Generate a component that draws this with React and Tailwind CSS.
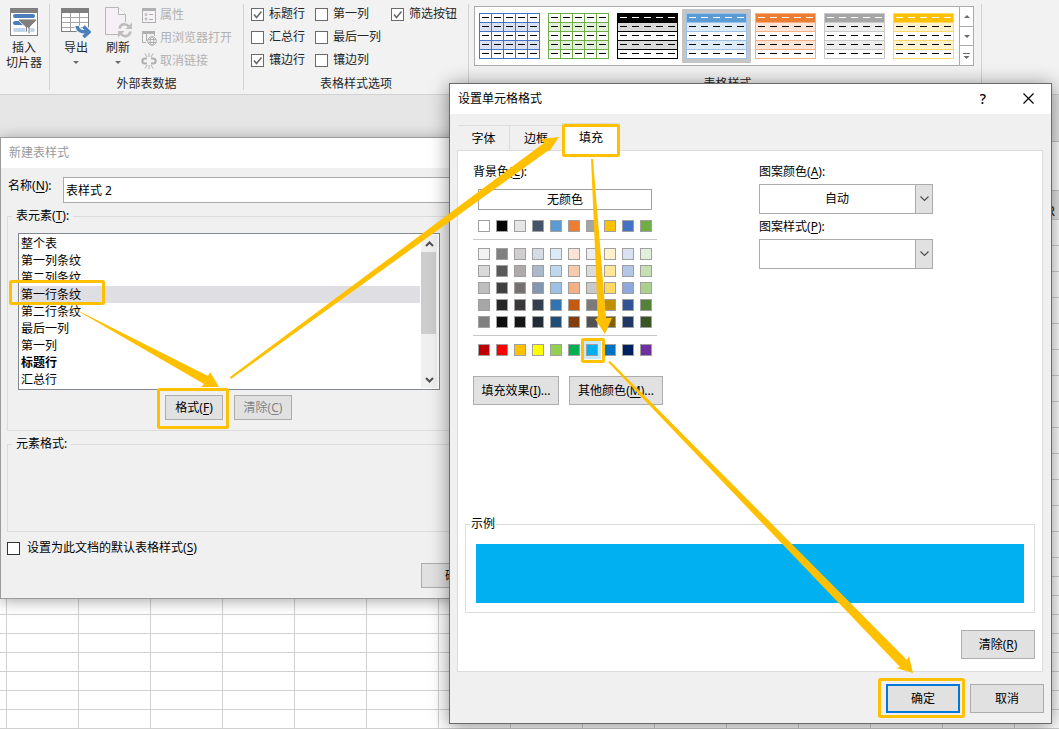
import React from 'react';
import clsx from 'clsx';

const tableElements = ['整个表', '第一列条纹', '第二列条纹', '第一行条纹', '第二行条纹', '最后一列', '第一列', '标题行', '汇总行'];

const styleOptions = [
  [['标题行', true], ['汇总行', false], ['镶边行', true]],
  [['第一列', false], ['最后一列', false], ['镶边列', false]],
  [['筛选按钮', true]],
];

const tableStyles = [
  { line: '#4472c4', head: '#ffffff', band: '#d9e1f2', dash: '#000000', cols: true },
  { line: '#70ad47', head: '#ffffff', band: '#e2efda', dash: '#000000', cols: true },
  { line: '#000000', head: '#000000', band: '#d9d9d9', dash: '#ffffff' },
  { line: '#9bc2e6', head: '#5b9bd5', band: '#ddebf7', dash: '#ffffff', selected: true },
  { line: '#f4b084', head: '#ed7d31', band: '#fce4d6', dash: '#ffffff' },
  { line: '#c9c9c9', head: '#a5a5a5', band: '#ededed', dash: '#ffffff' },
  { line: '#ffd966', head: '#ffc000', band: '#fff2cc', dash: '#ffffff' },
];

const themeColors = ['#ffffff', '#000000', '#e7e6e6', '#44546a', '#5b9bd5', '#ed7d31', '#a5a5a5', '#ffc000', '#4472c4', '#70ad47'];

const themeTints = [
  ['#f2f2f2', '#808080', '#d0cece', '#d6dce4', '#ddebf7', '#fce4d6', '#ededed', '#fff2cc', '#d9e1f2', '#e2efda'],
  ['#d9d9d9', '#595959', '#aeaaaa', '#acb9ca', '#bdd7ee', '#f8cbad', '#dbdbdb', '#ffe699', '#b4c6e7', '#c6e0b4'],
  ['#bfbfbf', '#404040', '#757171', '#8497b0', '#9bc2e6', '#f4b084', '#c9c9c9', '#ffd966', '#8ea9db', '#a9d08e'],
  ['#a6a6a6', '#262626', '#3a3838', '#333f4f', '#2f75b5', '#c65911', '#7b7b7b', '#bf8f00', '#305496', '#548235'],
  ['#808080', '#0d0d0d', '#161616', '#222b35', '#1f4e78', '#833c0c', '#525252', '#806000', '#203764', '#375623'],
];

const standardColors = ['#c00000', '#ff0000', '#ffc000', '#ffff00', '#92d050', '#00b050', '#00b0f0', '#0070c0', '#002060', '#7030a0'];

const Key = ({ children }) => (
  <span>
    (<span className="underline underline-offset-2">{children}</span>)
  </span>
);

const CheckBox = ({ children, checked, border = 'border-[#6a6a6a]', gap = 'gap-[5px]' }) => (
  <label className={clsx('flex items-center h-4', gap)}>
    <span className="relative flex">
      <input
        type="checkbox"
        defaultChecked={checked}
        className={clsx('peer appearance-none w-[13px] h-[13px] bg-white border', border)}
      />
      <svg className="absolute inset-0 hidden peer-checked:block pointer-events-none" width="13" height="13" fill="none" stroke="#6a6a6a" strokeWidth="1.6">
        <path d="M3 6.5 L5.5 9.5 L10.5 3.5" />
      </svg>
    </span>
    <span>{children}</span>
  </label>
);

const PushButton = ({ children, className, disabled, primary }) => (
  <button
    type="button"
    disabled={disabled}
    className={clsx(
      'bg-[#e1e1e1] text-center whitespace-nowrap',
      primary ? 'border-2 border-[#0078d7]' : 'border border-[#adadad]',
      disabled && 'text-[#838383]',
      className
    )}
  >
    {children}
  </button>
);

const SlicerIcon = () => (
  <svg width="28" height="28" viewBox="0 0 28 28">
    <rect x="0.5" y="0.5" width="27" height="27" fill="#fff" stroke="#7f7f7f" />
    <rect width="28" height="5" fill="#7f7f7f" />
    <rect x="3" y="6" width="22" height="4" rx="2" fill="#4a7ebb" />
    <rect x="3" y="13" width="12" height="4" rx="2" fill="#4a7ebb" />
    <rect x="3" y="20" width="22" height="4" rx="2" fill="#c0d4ec" />
    <path d="M8.5 11 H26.5 V12.5 L20 19 V26 L15.5 23.5 V19 L8.5 12.5 Z" fill="#7f7f7f" stroke="#fff" strokeWidth="0.8" />
    <path d="M17 19 L18.5 20 V25 L17 24 Z" fill="#fff" />
  </svg>
);

const ExportIcon = () => (
  <svg width="30" height="30" viewBox="0 0 30 30" fill="none">
    <rect x="0.5" y="0.5" width="27" height="23" fill="#fff" stroke="#7f7f7f" />
    <rect width="28" height="5" fill="#7f7f7f" />
    <path d="M1 9.5 H27 M1 14.5 H27 M1 19.5 H27 M9.5 5 V23 M18.5 5 V23" stroke="#a5a5a5" />
    <path d="M16 18 C17 23 20 24.5 27 24 M22.5 18.5 L28 24 L22.5 29" stroke="#f2f2f2" strokeWidth="6" />
    <path d="M16 18 C17 23 20 24.5 27 24 M22.5 18.5 L28 24 L22.5 29" stroke="#4a7ebb" strokeWidth="3.5" />
  </svg>
);

const RefreshIcon = () => (
  <svg width="28" height="31" viewBox="0 0 28 31" fill="none">
    <path d="M1.5 0.5 H14.5 L21.5 7.5 V27.5 H1.5 Z" fill="#f6f0f6" stroke="#b8b4b8" />
    <path d="M14.5 0.5 V7.5 H21.5" fill="#fff" stroke="#b8b4b8" />
    <circle cx="21" cy="23" r="8" fill="#f2f2f2" />
    <path d="M15.5 21.5 C16.5 16.5 22 16 25 19.500 M26.500 24.500 C25.500 29.500 20 30.500 17 27" stroke="#bdbdbd" strokeWidth="2.6" />
    <path d="M28 15.5 V22 H21.5 Z M14 30.5 V24 H20.5 Z" fill="#bdbdbd" />
  </svg>
);

const PropertiesIcon = () => (
  <svg width="16" height="16" viewBox="0 0 16 16" fill="none" stroke="#b0b0b0">
    <rect x="1.5" y="1.5" width="13" height="14" fill="#f6f2f6" />
    <path d="M1 2.5 H15" strokeWidth="3" />
    <circle cx="5" cy="7.5" r="1" />
    <circle cx="5" cy="12" r="1" />
    <path d="M8 7.5 H12 M8 12.5 H12" />
  </svg>
);

const BrowserIcon = () => (
  <svg width="16" height="16" viewBox="0 0 16 16" fill="none" stroke="#b0b0b0">
    <path d="M1.5 1 V12.5 H5 M5.5 4 V11 M13.5 2 V6" />
    <path d="M1 2.5 H14" strokeWidth="3" />
    <circle cx="11" cy="11" r="4.3" fill="#f2f2f2" />
    <ellipse cx="11" cy="11" rx="1.8" ry="4.3" />
    <path d="M7 9.5 H15 M7 12.5 H15" />
  </svg>
);

const UnlinkIcon = () => (
  <svg width="16" height="16" viewBox="0 0 16 16" fill="none" stroke="#b0b0b0">
    <path d="M6 5.5 H4 C0.500 5.5 0.500 10.5 4 10.5 H6 M10 5.5 H12 C15.5 5.5 15.5 10.5 12 10.5 H10" strokeWidth="2.2" />
    <path d="M8 0 V4 M4 0.5 L6 4 M12 0.5 L10 4 M8 12 V16 M4 15.5 L6 12 M12 15.5 L10 12" />
  </svg>
);

const Caret = () => (
  <svg width="6" height="3" fill="#6a6a6a">
    <path d="M0 0 H6 L3 3 Z" />
  </svg>
);

const StyleThumb = ({ line, head, band, dash, cols }) => (
  <svg width="61" height="46" viewBox="0 0 61 46" shapeRendering="crispEdges">
    <rect width="61" height="46" fill={line} />
    {[0, 1, 2, 3, 4].map((r) => (
      <g key={r}>
        <rect x="1" y={1 + r * 9} width="59" height="8" fill={r === 0 ? head : r % 2 ? band : '#ffffff'} />
        {[0, 1, 2, 3, 4].map((c) => (
          <rect key={c} x={3 + c * 12} y={4 + r * 9} width="7" height="1" fill={r === 0 ? dash : '#000000'} />
        ))}
      </g>
    ))}
    {cols && [12, 24, 36, 48].map((x) => <rect key={x} x={x} width="1" height="46" fill={line} />)}
  </svg>
);

const Ribbon = () => (
  <header className="flex shrink-0 h-[95px] pt-1 bg-[#f2f2f2] border-b border-[#d2d2d2] text-[#262626]">
    <div className="w-[50px] mb-1 border-r border-[#d2d2d2]">
      <button type="button" className="w-12 pt-1 flex flex-col items-center leading-[15px]">
        <SlicerIcon />
        <span className="mt-1">插入</span>
        <span>切片器</span>
      </button>
    </div>

    <section className="w-[194px] mb-1 flex flex-col justify-between border-r border-[#d2d2d2]">
      <div className="flex">
        <button type="button" className="w-[52px] pt-1 flex flex-col items-center">
          <ExportIcon />
          <span className="mt-[2px] mb-[5px]">导出</span>
          <Caret />
        </button>
        <button type="button" className="w-[32px] pt-[3px] flex flex-col items-center">
          <RefreshIcon />
          <span className="mt-[2px] mb-[5px]">刷新</span>
          <Caret />
        </button>
        <div className="flex flex-col gap-[7px] pt-[3px] pl-[7px] text-[#b1b1b1]">
          <button type="button" disabled className="flex items-center gap-[3px]"><PropertiesIcon />属性</button>
          <button type="button" disabled className="flex items-center gap-[3px]"><BrowserIcon />用浏览器打开</button>
          <button type="button" disabled className="flex items-center gap-[3px]"><UnlinkIcon />取消链接</button>
        </div>
      </div>
      <h2 className="text-center leading-3">外部表数据</h2>
    </section>

    <section className="w-[225px] mb-1 flex flex-col justify-between border-r border-[#d2d2d2]">
      <div className="flex gap-[10px] pt-[2px] pl-[7px]">
        {styleOptions.map((group, i) => (
          <div key={i} className="flex flex-col gap-[7px]">
            {group.map(([label, checked]) => (
              <CheckBox key={label} checked={checked}>{label}</CheckBox>
            ))}
          </div>
        ))}
      </div>
      <h2 className="text-center leading-3">表格样式选项</h2>
    </section>

    <section className="w-[513px] mb-1 pl-[5px] flex flex-col justify-between border-r border-[#d2d2d2]">
      <div className="mt-[2px] w-[500px] h-[60px] flex bg-white border border-[#ababab]">
        <div className="flex-1 flex items-center">
          {tableStyles.map((s) => (
            <button
              key={s.head + s.line}
              type="button"
              className={clsx('w-[69px] h-[54px] flex items-center justify-center', s.selected && 'bg-[#c5c5c5]')}
            >
              <StyleThumb {...s} />
            </button>
          ))}
        </div>
        <div className="w-[14px] flex flex-col border-l border-[#ababab] divide-y divide-[#ababab]">
          <button type="button" className="flex-1 flex items-center justify-center">
            <svg width="6" height="3" fill="#6a6a6a"><path d="M0 3 H6 L3 0 Z" /></svg>
          </button>
          <button type="button" className="flex-1 flex items-center justify-center"><Caret /></button>
          <button type="button" className="flex-1 flex items-center justify-center">
            <svg width="7" height="6" fill="#6a6a6a"><path d="M0 0 H7 V1 H0 Z M0.5 3 H6.5 L3.5 6 Z" /></svg>
          </button>
        </div>
      </div>
      <h2 className="text-center leading-3">表格样式</h2>
    </section>
  </header>
);

const SheetRow = ({ height, lastCell }) => (
  <div className={clsx('flex border-b border-[#d0d0d0]', height)}>
    <div className="w-[7px] shrink-0 border-r border-[#d0d0d0]" />
    {Array.from({ length: 15 }, (_, i) => (
      <div key={i} className="w-[72px] shrink-0 border-r border-[#d0d0d0] flex items-end justify-center">
        {i === 14 && lastCell}
      </div>
    ))}
  </div>
);

const Sheet = () => (
  <main className="flex-1 min-h-0 overflow-hidden bg-white">
    <div className="h-[47px] bg-[#e6e6e6] border-b border-[#c6c6c6]" />
    <div className="h-[49px] border-b border-[#c6c6c6]" />
    <div className="bg-[#e6e6e6] text-sm leading-4 text-[#262626]">
      <SheetRow height="h-[29px]" lastCell="R" />
    </div>
    {Array.from({ length: 11 }, (_, i) => <SheetRow key={i} height="h-[26px]" />)}
    <SheetRow height="h-[26px]" />
    <SheetRow height="h-[26px]" />
    {Array.from({ length: 10 }, (_, i) => <SheetRow key={i} height="h-[19px]" />)}
  </main>
);

const NewStyleDialog = () => (
  <section className="absolute left-0 top-[137px] w-[582px] bg-[#f0f0f0] border border-[#9b9b9b] shadow-[0_2px_14px_rgba(0,0,0,0.35)]">
    <h1 className="h-[30px] bg-white pl-2 flex items-center text-[#999999]">新建表样式</h1>
    <div className="px-[6px] pb-[10px]">
      <div className="flex pt-[9px] pl-px">
        <label htmlFor="style-name" className="w-[55px] pt-px">名称<Key>N</Key>:</label>
        <input
          id="style-name"
          type="text"
          defaultValue="表样式 2"
          className="flex-1 h-[26px] px-[2px] bg-white border border-[#ababab]"
        />
      </div>

      <fieldset className="mt-[5px] px-[10px] pb-[10px] border border-[#dcdcdc]">
        <legend className="-ml-[6px] px-1">表元素<Key>T</Key>:</legend>
        <div className="mt-[9px] w-[422px] h-[157px] flex bg-white border border-[#828790]">
          <ul className="flex-1 pt-px pl-px" role="listbox">
            {tableElements.map((name) => (
              <li
                key={name}
                role="option"
                aria-selected={name === '第一行条纹'}
                className={clsx(
                  'h-[17px] pl-px leading-[17px]',
                  name === '第一行条纹' && 'bg-[#dfdee3]',
                  name === '标题行' && 'font-bold'
                )}
              >
                {name}
              </li>
            ))}
          </ul>
          <div className="my-px mr-[2px] ml-px w-4 flex flex-col bg-[#f0f0f0]">
            <button type="button" className="h-[17px] flex items-center justify-center">
              <svg width="9" height="6" fill="none" stroke="#505050" strokeWidth="2"><path d="M1 5 L4.5 1.5 L8 5" /></svg>
            </button>
            <div className="h-[82px] w-[15px] bg-[#cdcdcd]" />
            <button type="button" className="mt-auto h-[17px] flex items-center justify-center">
              <svg width="9" height="6" fill="none" stroke="#505050" strokeWidth="2"><path d="M1 1 L4.5 4.5 L8 1" /></svg>
            </button>
          </div>
        </div>
        <div className="mt-[5px] ml-[147px] flex gap-[11px]">
          <PushButton className="w-[58px] h-[25px]">格式<Key>F</Key></PushButton>
          <PushButton className="w-[58px] h-[25px]" disabled>清除<Key>C</Key></PushButton>
        </div>
      </fieldset>

      <fieldset className="mt-[5px] h-[96px] px-[10px] border border-[#dcdcdc]">
        <legend className="-ml-[6px] px-1">元素格式:</legend>
      </fieldset>

      <div className="mt-2">
        <CheckBox border="border-[#333333]" gap="gap-[7px]">设置为此文档的默认表格样式<Key>S</Key></CheckBox>
      </div>
      <div className="mt-[7px] pr-[2px] flex justify-end gap-2">
        <PushButton className="w-[72px] h-[25px]">确定</PushButton>
        <PushButton className="w-[72px] h-[25px]">取消</PushButton>
      </div>
    </div>
  </section>
);

const SwatchRow = ({ colors, selected }) => (
  <div className="flex gap-[6px] px-[5px]">
    {colors.map((color) => (
      <button
        key={color}
        type="button"
        aria-label={color}
        className={clsx(
          'w-3 h-3 border border-[#a0a0a0]',
          color === selected && 'outline-[3px] outline-[#cce8ff]'
        )}
        style={{ backgroundColor: color }}
      />
    ))}
  </div>
);

const Dropdown = ({ id, label, value }) => (
  <div className="flex flex-col gap-1">
    <label htmlFor={id}>{label}:</label>
    <div className="relative w-[174px] h-[30px]">
      <select
        id={id}
        className="appearance-none w-full h-full pr-[18px] bg-white border border-[#ababab] text-center [text-align-last:center]"
      >
        <option>{value}</option>
      </select>
      <span className="absolute right-0 inset-y-0 w-[18px] bg-[#e1e1e1] border border-[#ababab] flex items-center justify-center pointer-events-none">
        <svg width="9" height="6" fill="none" stroke="#505050" strokeWidth="1.2"><path d="M0.5 0.5 L4.5 4.5 L8.5 0.5" /></svg>
      </span>
    </div>
  </div>
);

const FormatCellsDialog = () => (
  <section className="absolute left-[449px] top-[83px] w-[603px] bg-[#f0f0f0] border border-[#6a6a6a] shadow-[0_2px_18px_rgba(0,0,0,0.45)]">
    <header className="h-[30px] bg-white pl-2 pr-[17px] flex items-center">
      <h1 className="flex-1">设置单元格格式</h1>
      <button type="button" className="text-sm leading-4 font-medium w-3 mr-[34px]">?</button>
      <button type="button" aria-label="关闭" className="pb-[2px]">
        <svg width="11" height="11" stroke="#000" strokeWidth="1.2"><path d="M0.5 0.5 L10.5 10.5 M10.5 0.5 L0.5 10.5" /></svg>
      </button>
    </header>

    <div className="pt-[9px] px-2 flex items-end" role="tablist">
      <button type="button" role="tab" className="w-[52px] h-[25px] pt-[2px] border-t border-r border-[#dcdcdc]">字体</button>
      <button type="button" role="tab" className="w-[52px] h-[25px] pt-[2px] border-t border-[#dcdcdc]">边框</button>
      <button type="button" role="tab" aria-selected="true" className="relative w-[58px] h-[28px] -mb-px bg-white border border-b-0 border-[#dcdcdc]">填充</button>
    </div>

    <div className="mx-[7px] mr-2 px-[7px] pb-3 bg-white border border-[#dcdcdc]">
      <div className="flex justify-between pt-[13px] pl-2 pr-[102px]">
        <div>
          <div>背景色<Key>C</Key>:</div>
          <div className="mt-[9px] w-[184px] flex flex-col">
            <button type="button" className="mx-[5px] h-[21px] bg-white border border-[#a0a0a0]">无颜色</button>
            <div className="pt-[10px] pb-[7px] border-b border-[#c8c8c8]">
              <SwatchRow colors={themeColors} />
            </div>
            <div className="pt-2 pb-[7px] flex flex-col gap-[5px] border-b border-[#c8c8c8]">
              {themeTints.map((row) => <SwatchRow key={row[0]} colors={row} />)}
            </div>
            <div className="pt-2">
              <SwatchRow colors={standardColors} selected="#00b0f0" />
            </div>
          </div>
          <div className="mt-5 flex gap-[10px]">
            <PushButton className="w-[86px] h-[29px]">填充效果<Key>I</Key>...</PushButton>
            <PushButton className="w-[94px] h-[29px]">其他颜色<Key>M</Key>...</PushButton>
          </div>
        </div>

        <div className="flex flex-col gap-[5px]">
          <Dropdown id="pattern-color" label={<>图案颜色<Key>A</Key></>} value="自动" />
          <Dropdown id="pattern-style" label={<>图案样式<Key>P</Key></>} value="" />
        </div>
      </div>

      <fieldset className="mt-[111px] px-[10px] pb-[9px] border border-[#dcdcdc]">
        <legend className="-ml-[6px] px-px">示例</legend>
        <div className="mt-3 h-[59px] bg-[#00b0f0]" />
      </fieldset>

      <div className="mt-[17px] flex justify-end">
        <PushButton className="w-[74px] h-[29px]">清除<Key>R</Key></PushButton>
      </div>
    </div>

    <footer className="flex justify-end gap-[10px] pt-3 pb-[10px] pr-[7px]">
      <PushButton className="w-[74px] h-[29px]" primary>确定</PushButton>
      <PushButton className="w-[74px] h-[29px]">取消</PushButton>
    </footer>
  </section>
);

// Highlight boxes and arrows drawn over both dialogs
const Annotations = () => (
  <svg className="absolute left-0 top-0 pointer-events-none" width="1059" height="729">
    <g fill="#ffc000">
      <path d="M71 307 L208 376 L210 372 L219 387 L201 387 L204 384 Z" />
      <path d="M230 377 L544 143 L541 139 L559 137 L549 152 L549 150 L231 379 Z" />
      <path d="M591 159 L593 159 L606 318 L612 318 L605 334 L595 319 L598 318 Z" />
      <path d="M608 362 L610 361 L907 660 L909 656 L913 673 L896 668 L900 667 Z" />
    </g>
    <g fill="none" stroke="#ffc000" strokeWidth="3">
      <rect x="10.5" y="281.5" width="93" height="22" rx="1" />
      <rect x="158.5" y="389.5" width="69" height="38" rx="1" />
      <rect x="563.5" y="125.5" width="55" height="30" rx="1" />
      <rect x="582.5" y="339.5" width="21" height="22" rx="1" />
      <rect x="879.5" y="679.5" width="84" height="37" rx="1" />
    </g>
  </svg>
);

const App = () => (
  <div className="relative h-screen overflow-hidden flex flex-col text-xs leading-4 text-black font-['Noto_Sans','Noto_Sans_CJK_SC',sans-serif]">
    <Ribbon />
    <Sheet />
    <NewStyleDialog />
    <FormatCellsDialog />
    <Annotations />
  </div>
);

export default App;
